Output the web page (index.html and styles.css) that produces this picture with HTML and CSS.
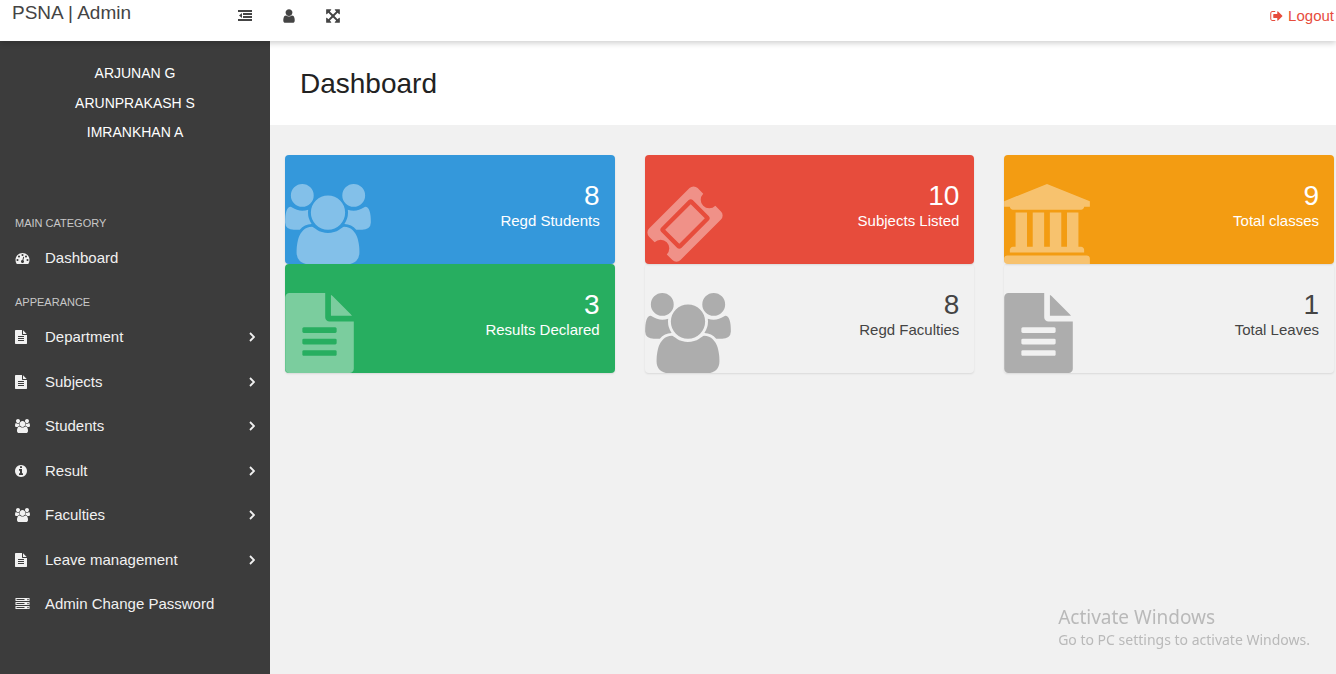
FILE: index.html
```html
<!DOCTYPE html>
<html lang="en">
<head>
<meta charset="utf-8">
<title>PSNA | Admin</title>
<link rel="stylesheet" href="styles.css">
</head>
<body>
<svg class="sprite" aria-hidden="true">
  <symbol id="users" viewBox="64 0 1920 1792"><path d="M657 896q-162 5-265 128h-134q-82 0-138-40.5t-56-118.5q0-353 124-353 6 0 43.5 21t97.5 42.5 119 21.5q67 0 133-23-5 37-5 66 0 139 81 256zm1071 637q0 120-73 189.5t-194 69.5h-874q-121 0-194-69.5t-73-189.5q0-53 3.5-103.5t14-109 26.5-108.5 43-97.5 62-81 85.5-53.5 111.5-20q10 0 43 21.5t73 48 107 48 135 21.5 135-21.5 107-48 73-48 43-21.5q61 0 111.5 20t85.5 53.5 62 81 43 97.5 26.5 108.5 14 109 3.5 103.5zm-1024-1277q0 106-75 181t-181 75-181-75-75-181 75-181 181-75 181 75 75 181zm704 384q0 159-112.5 271.5t-271.5 112.5-271.5-112.5-112.5-271.5 112.5-271.5 271.5-112.5 271.5 112.5 112.5 271.5zm576 225q0 78-56 118.5t-138 40.5h-134q-103-123-265-128 81-117 81-256 0-29-5-66 66 23 133 23 59 0 119-21.5t97.5-42.5 43.5-21q124 0 124 353zm-128-609q0 106-75 181t-181 75-181-75-75-181 75-181 181-75 181 75 75 181z"/></symbol>
  <symbol id="file" viewBox="128 0 1536 1792"><path d="M1596 476q14 14 28 36h-472v-472q22 14 36 28zm-476 164h544v1056q0 40-28 68t-68 28h-1344q-40 0-68-28t-28-68v-1600q0-40 28-68t68-28h800v544q0 40 28 68t68 28zm160 736v-64q0-14-9-23t-23-9h-704q-14 0-23 9t-9 23v64q0 14 9 23t23 9h704q14 0 23-9t9-23zm0-256v-64q0-14-9-23t-23-9h-704q-14 0-23 9t-9 23v64q0 14 9 23t23 9h704q14 0 23-9t9-23zm0-256v-64q0-14-9-23t-23-9h-704q-14 0-23 9t-9 23v64q0 14 9 23t23 9h704q14 0 23-9t9-23z"/></symbol>
  <symbol id="ticket" viewBox="0 0 1792 1792"><path d="M1024 452l316 316-572 572-316-316zm-211 979l618-618q19-19 19-45t-19-45l-362-362q-18-18-45-18t-45 18l-618 618q-19 19-19 45t19 45l362 362q18 18 45 18t45-18zm889-637l-907 908q-37 37-90.5 37t-90.5-37l-126-125q56-56 56-136t-56-136-136-56-136 56l-125-126q-37-37-37-90.5t37-90.5l907-906q37-37 90.5-37t90.5 37l125 125q-56 56-56 136t56 136 136 56 136-56l126 125q37 37 37 90.5t-37 90.5z"/></symbol>
  <symbol id="bank" viewBox="0 0 1920 1792"><path d="M960 0l960 384v128h-128q0 26-20.500 45t-48.500 19h-1526q-28 0-48.500-19t-20.500-45h-128v-128zm-704 640h256v768h128v-768h256v768h128v-768h256v768h128v-768h256v768h59q28 0 48.500 19t20.500 45v64h-1664v-64q0-26 20.500-45t48.500-19h59v-768zm1595 960q28 0 48.500 19t20.500 45v128h-1920v-128q0-26 20.500-45t48.500-19h1782z"/></symbol>
  <symbol id="gauge" viewBox="0 0 1792 1792"><path d="M384 1152q0-53-37.5-90.5t-90.5-37.5-90.5 37.5-37.5 90.5 37.5 90.5 90.5 37.5 90.5-37.5 37.5-90.5zm192-448q0-53-37.5-90.5t-90.5-37.5-90.5 37.5-37.5 90.5 37.5 90.5 90.5 37.5 90.5-37.5 37.5-90.5zm428 481l101-382q6-26-7.5-48.5t-38.5-29.5-48 6.5-30 39.5l-101 382q-60 5-107 43.5t-63 98.5q-20 77 20 146t117 89 146-20 89-117q16-60-6-117t-72-91zm660-33q0-53-37.5-90.5t-90.5-37.5-90.5 37.5-37.5 90.5 37.5 90.5 90.5 37.5 90.5-37.5 37.5-90.5zm-640-640q0-53-37.5-90.5t-90.5-37.5-90.5 37.5-37.5 90.5 37.5 90.5 90.5 37.5 90.5-37.5 37.5-90.5zm448 192q0-53-37.5-90.5t-90.5-37.5-90.5 37.5-37.5 90.5 37.5 90.5 90.5 37.5 90.5-37.5 37.5-90.5zm320 448q0 261-141 483-19 29-54 29h-1402q-35 0-54-29-141-221-141-483 0-182 71-348t191-286 286-191 348-71 348 71 286 191 191 286 71 348z"/></symbol>
  <symbol id="info" viewBox="128 0 1536 1792"><path d="M1152 1376v-160q0-14-9-23t-23-9h-96v-512q0-14-9-23t-23-9h-320q-14 0-23 9t-9 23v160q0 14 9 23t23 9h96v320h-96q-14 0-23 9t-9 23v160q0 14 9 23t23 9h448q14 0 23-9t9-23zm-128-896v-160q0-14-9-23t-23-9h-192q-14 0-23 9t-9 23v160q0 14 9 23t23 9h192q14 0 23-9t9-23zm640 416q0 209-103 385.5t-279.5 279.5-385.5 103-385.5-103-279.5-279.5-103-385.5 103-385.5 279.5-279.5 385.5-103 385.5 103 279.5 279.5 103 385.5z"/></symbol>
  <symbol id="server" viewBox="0 0 1792 1792"><path d="M128 1408h1024v-128h-1024v128zm0-512h1024v-128h-1024v128zm1568 448q0-40-28-68t-68-28-68 28-28 68 28 68 68 28 68-28 28-68zm-1568-960h1024v-128h-1024v128zm1568 448q0-40-28-68t-68-28-68 28-28 68 28 68 68 28 68-28 28-68zm0-512q0-40-28-68t-68-28-68 28-28 68 28 68 68 28 68-28 28-68zm96 832v384h-1792v-384h1792zm0-512v384h-1792v-384h1792zm0-512v384h-1792v-384h1792z"/></symbol>
  <symbol id="angle" viewBox="0 0 6 10"><path d="M1 1l4 4-4 4" fill="none" stroke="currentColor" stroke-width="1.8"/></symbol>
  <symbol id="dedent" viewBox="0 0 14 14"><path d="M0 1h14v2H0zM5 4h9v2H5zM5 7h9v2H5zM0 10h14v2H0zM4 4v5L1 6.500z"/></symbol>
  <symbol id="user" viewBox="256 0 1280 1792"><path d="M1536 1399q0 109-62.500 187t-150.500 78h-854q-88 0-150.500-78t-62.500-187q0-85 8.500-160.500t31.500-152 58.500-131 94-89 134.500-34.500q131 128 313 128t313-128q76 0 134.500 34.500t94 89 58.500 131 31.500 152 8.500 160.500zm-256-887q0 159-112.500 271.500t-271.500 112.500-271.500-112.500-112.500-271.500 112.500-271.500 271.500-112.500 271.500 112.500 112.500 271.500z"/></symbol>
  <symbol id="expand" viewBox="128 0 1536 1792"><path d="M1411 541l-355 355 355 355 144-144q29-31 70-14 39 17 39 59v448q0 26-19 45t-45 19h-448q-42 0-59-40-17-39 14-69l144-144-355-355-355 355 144 144q31 30 14 69-17 40-59 40h-448q-26 0-45-19t-19-45v-448q0-42 40-59 39-17 69 14l144 144 355-355-355-355-144 144q-19 19-45 19-12 0-24-5-40-17-40-59v-448q0-26 19-45t45-19h448q42 0 59 40 17 39-14 69l-144 144 355 355 355-355-144-144q-31-30-14-69 17-40 59-40h448q26 0 45 19t19 45v448q0 42-39 59-13 5-25 5-26 0-45-19z"/></symbol>
  <symbol id="exit" viewBox="64 0 1600 1792"><path d="M704 1440q0 4 1 20t.5 26.500-3 23.500-10 19.500-20.500 6.500h-320q-119 0-203.500-84.500t-84.500-203.500v-704q0-119 84.500-203.500t203.500-84.500h320q13 0 22.500 9.500t9.500 22.500q0 4 1 20t.5 26.500-3 23.500-10 19.500-20.500 6.500h-320q-66 0-113 47t-47 113v704q0 66 47 113t113 47h312l11.500 1 11.500 3 8 5.500 7 9 2 13.500zm928-544q0 26-19 45l-544 544q-19 19-45 19t-45-19-19-45v-288h-448q-26 0-45-19t-19-45v-384q0-26 19-45t45-19h448v-288q0-26 19-45t45-19 45 19l544 544q19 19 19 45z"/></symbol>
</svg>

<header class="topbar">
  <a class="brand" href="#">PSNA | Admin</a>
  <div class="tools">
    <button class="tool" type="button" aria-label="Toggle sidebar"><svg class="tool-icon"><use href="#dedent"/></svg></button>
    <button class="tool" type="button" aria-label="Profile"><svg class="tool-icon large"><use href="#user"/></svg></button>
    <button class="tool" type="button" aria-label="Full screen"><svg class="tool-icon large"><use href="#expand"/></svg></button>
  </div>
  <a class="logout" href="#"><svg class="icon"><use href="#exit"/></svg>Logout</a>
</header>

<div class="shell">
  <aside class="sidebar">
    <ul class="people">
      <li>ARJUNAN G</li>
      <li>ARUNPRAKASH S</li>
      <li>IMRANKHAN A</li>
    </ul>
    <nav>
      <h2 class="group">MAIN CATEGORY</h2>
      <ul class="menu">
        <li><a class="item" href="#"><svg class="icon"><use href="#gauge"/></svg><span>Dashboard</span></a></li>
      </ul>
      <h2 class="group">APPEARANCE</h2>
      <ul class="menu">
        <li><a class="item" href="#"><svg class="icon slim"><use href="#file"/></svg><span>Department</span><svg class="arrow"><use href="#angle"/></svg></a></li>
        <li><a class="item" href="#"><svg class="icon slim"><use href="#file"/></svg><span>Subjects</span><svg class="arrow"><use href="#angle"/></svg></a></li>
        <li><a class="item" href="#"><svg class="icon"><use href="#users"/></svg><span>Students</span><svg class="arrow"><use href="#angle"/></svg></a></li>
        <li><a class="item" href="#"><svg class="icon slim"><use href="#info"/></svg><span>Result</span><svg class="arrow"><use href="#angle"/></svg></a></li>
        <li><a class="item" href="#"><svg class="icon"><use href="#users"/></svg><span>Faculties</span><svg class="arrow"><use href="#angle"/></svg></a></li>
        <li><a class="item" href="#"><svg class="icon slim"><use href="#file"/></svg><span>Leave management</span><svg class="arrow"><use href="#angle"/></svg></a></li>
        <li><a class="item" href="#"><svg class="icon"><use href="#server"/></svg><span>Admin Change Password</span></a></li>
      </ul>
    </nav>
  </aside>

  <main class="content">
    <h1 class="title">Dashboard</h1>
    <div class="cards">
      <a class="card blue" href="#"><svg class="card-icon wide"><use href="#users"/></svg><span class="stat"><span class="number">8</span><span>Regd Students</span></span></a>
      <a class="card red" href="#"><svg class="card-icon square"><use href="#ticket"/></svg><span class="stat"><span class="number">10</span><span>Subjects Listed</span></span></a>
      <a class="card orange" href="#"><svg class="card-icon wide"><use href="#bank"/></svg><span class="stat"><span class="number">9</span><span>Total classes</span></span></a>
      <a class="card green" href="#"><svg class="card-icon narrow"><use href="#file"/></svg><span class="stat"><span class="number">3</span><span>Results Declared</span></span></a>
      <a class="card" href="#"><svg class="card-icon wide"><use href="#users"/></svg><span class="stat"><span class="number">8</span><span>Regd Faculties</span></span></a>
      <a class="card" href="#"><svg class="card-icon narrow"><use href="#file"/></svg><span class="stat"><span class="number">1</span><span>Total Leaves</span></span></a>
    </div>
  </main>
</div>

<div class="watermark">
  <p class="watermark-title">Activate Windows</p>
  <p class="watermark-text">Go to PC settings to activate Windows.</p>
</div>
</body>
</html>
```
FILE: styles.css
```css
* { box-sizing: border-box; }

body {
  margin: 0;
  min-height: 100vh;
  display: flex;
  flex-direction: column;
  background: #f1f1f1;
  color: #444;
  font: 15px/1.3 "Liberation Sans", Arial, sans-serif;
}

a { color: inherit; text-decoration: none; }
ul { list-style: none; margin: 0; padding: 0; }
svg { fill: currentColor; flex: none; }
.sprite { position: absolute; width: 0; height: 0; }
.icon { width: 15px; height: 14px; }

.topbar {
  position: relative;
  z-index: 1;
  display: flex;
  align-items: flex-start;
  height: 41px;
  padding: 0 2px 0 12px;
  background: #fff;
  box-shadow: 0 2px 6px rgba(0, 0, 0, 0.2);
}
.brand { width: 218px; font-size: 19px; line-height: 26px; }
.tools { display: flex; gap: 14px; padding-top: 4px; }
.tool {
  display: flex;
  align-items: center;
  justify-content: center;
  width: 30px;
  height: 24px;
  padding: 0;
  border: 0;
  background: none;
  color: #444;
}
.tool-icon { width: 14px; height: 14px; }
.large { height: 16px; }
.logout {
  display: flex;
  align-items: center;
  gap: 4px;
  margin-left: auto;
  line-height: 32px;
  color: #e74c3c;
}

.shell { flex: 1; display: flex; }
.sidebar { flex: none; width: 270px; background: #3c3c3c; color: #f1f1f1; }

.people {
  padding: 18px 0 63px;
  text-align: center;
  font-size: 14px;
  line-height: 1.4;
  color: #fff;
}
.people li { padding: 5px 0; }

.group {
  margin: 0;
  padding: 0 15px;
  font-size: 11px;
  font-weight: normal;
  line-height: 24px;
  color: #c8c8c8;
}
.menu + .group { padding-top: 11px; }
.item { display: flex; align-items: center; padding: 13px 15px 12px; }
.item .icon { margin-right: 15px; }
.item .slim { width: 12px; margin-right: 18px; }
.arrow { width: 6px; height: 10px; margin-left: auto; }

.content { flex: 1; min-width: 0; }
.title {
  margin: 0;
  padding: 25px 30px 23px;
  background: #fff;
  color: #222;
  font-size: 28px;
  font-weight: normal;
  line-height: 36px;
}
.cards {
  display: grid;
  grid-template-columns: repeat(3, 1fr);
  column-gap: 30px;
  padding: 30px 2px 30px 15px;
}
.card {
  display: flex;
  align-items: flex-end;
  justify-content: space-between;
  padding-top: 26px;
  border-radius: 4px;
  box-shadow: 0 1px 2px rgba(0, 0, 0, 0.1);
}
.card-icon { height: 80px; opacity: 0.39; }
.wide { width: 86px; }
.square { width: 80px; }
.narrow { width: 69px; }
.stat {
  display: flex;
  flex-direction: column;
  padding: 0 15px 33px 0;
  text-align: right;
  line-height: 20px;
}
.number { font-size: 28px; line-height: 30px; }
.blue, .red, .orange, .green { color: #fff; }
.blue { background: #3498db; }
.red { background: #e74c3c; }
.orange { background: #f39c12; }
.green { background: #27ae60; }

.watermark {
  position: fixed;
  right: 26px;
  bottom: 23px;
  z-index: 2;
  color: #b9b9b9;
  font-family: "Noto Sans", "Open Sans", sans-serif;
}
.watermark p { margin: 0; }
.watermark-title { font-size: 19px; line-height: 24px; }
.watermark-text { font-size: 14px; line-height: 22px; }
```
